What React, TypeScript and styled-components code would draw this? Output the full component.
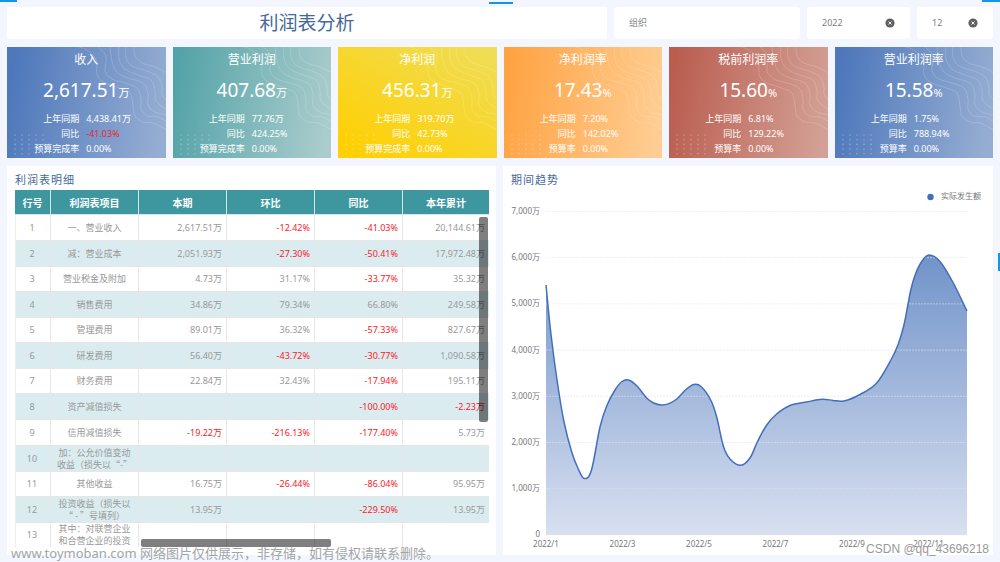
import React from "react";
import styled, { createGlobalStyle } from "styled-components";

const GlobalStyle = createGlobalStyle`
  * { box-sizing: border-box; }
  body {
    margin: 0;
    background: #f3f6fe;
    font-family: "Noto Sans", "Noto Sans CJK SC", sans-serif;
    color: #999;
  }
`;

const Page = styled.div`
  position: relative;
  display: flex;
  flex-direction: column;
  gap: 8px;
  height: 100vh;
  min-height: 560px;
  padding: 7px;
  overflow: hidden;
`;

const Accent = styled.i<{ $edge: "left" | "center" | "right" | "side" }>`
  position: absolute;
  background: #1296e6;
  ${({ $edge }) =>
    ({
      left: "left: 0; top: 0; width: 17px; height: 2px;",
      center: "left: 489px; top: 2px; width: 24px; height: 2px;",
      right: "right: 0; top: 0; width: 18px; height: 2px;",
      side: "right: 0; top: 253px; width: 2px; height: 18px;",
    })[$edge]}
`;

const TopBar = styled.header`
  display: grid;
  grid-template-columns: 600fr 186fr 103fr 76fr;
  gap: 7px;
  height: 32px;
  flex: none;
`;

const Title = styled.h1`
  margin: 0;
  background: #fff;
  color: #44689b;
  font-size: 19px;
  font-weight: 400;
  line-height: 32px;
  text-align: center;
`;

const Filter = styled.div`
  display: flex;
  align-items: center;
  min-width: 0;
  padding: 0 15px;
  background: #fff;
  border-radius: 3px;
`;

const FilterInput = styled.input`
  flex: 1;
  min-width: 0;
  width: 0;
  padding: 0;
  border: 0;
  outline: 0;
  background: none;
  color: #808080;
  font: 9px/16px "Noto Sans", "Noto Sans CJK SC", sans-serif;
  &::placeholder { color: #888; opacity: 1; }
`;

const ClearButton = styled.button`
  display: flex;
  padding: 0;
  border: 0;
  background: none;
`;

const Cards = styled.section`
  display: grid;
  grid-template-columns: repeat(6, 1fr);
  gap: 7px;
  flex: none;
`;

const Card = styled.article<{ $fill: string }>`
  position: relative;
  height: 111px;
  padding-top: 4px;
  background: ${({ $fill }) => $fill};
  color: #fff;
  text-align: center;
  overflow: hidden;
`;

const Waves = styled.svg`
  position: absolute;
  right: 0;
  top: 0;
`;

const Dots = styled.svg`
  position: absolute;
  left: 6px;
  bottom: 3px;
`;

const CardTitle = styled.h2`
  position: relative;
  margin: 0;
  font-size: 12px;
  font-weight: 400;
  line-height: 18px;
`;

const CardValue = styled.p`
  position: relative;
  margin: 8px 0 5px;
  font-size: 19px;
  line-height: 26px;
`;

const Unit = styled.span`
  font-size: 11px;
`;

const Facts = styled.dl`
  position: relative;
  display: grid;
  grid-template-columns: 1fr 1fr;
  margin: 0;
  font-size: 9px;
  line-height: 15px;
`;

const FactName = styled.dt`
  padding-right: 7px;
  text-align: right;
`;

const FactValue = styled.dd<{ $down?: boolean }>`
  margin: 0;
  text-align: left;
  color: ${({ $down }) => ($down ? "#e8252f" : "inherit")};
`;

const Panels = styled.main`
  display: grid;
  grid-template-columns: 489fr 490fr;
  gap: 7px;
  flex: 1;
  min-height: 0;
`;

const Panel = styled.section`
  display: flex;
  flex-direction: column;
  min-width: 0;
  min-height: 0;
  padding: 3px 7px 8px 8px;
  background: #fff;
`;

const ChartPanel = styled(Panel)`
  padding: 3px 0 0;
`;

const PanelTitle = styled.h2<{ $inset?: boolean }>`
  margin: 0;
  padding-left: ${({ $inset }) => ($inset ? "8px" : "0")};
  color: #44689b;
  font-size: 11px;
  font-weight: 400;
  letter-spacing: 1px;
  line-height: 21px;
`;

const TableView = styled.div`
  position: relative;
  flex: 1;
  min-height: 0;
  overflow: hidden;
`;

const Thumb = styled.i<{ $vertical?: boolean }>`
  position: absolute;
  border-radius: 2px;
  background: rgba(0, 0, 0, 0.5);
  ${({ $vertical }) =>
    $vertical
      ? "right: 1px; top: 27px; width: 9px; height: 205px;"
      : "left: 126px; bottom: 0; width: 190px; height: 8px;"}
`;

const Table = styled.table`
  width: 100%;
  table-layout: fixed;
  border-collapse: separate;
  border-spacing: 0;
  font-size: 9px;
  line-height: 12px;
`;

const IndexCol = styled.col`
  width: 36px;
`;

const DataCol = styled.col`
  width: 88px;
`;

const HeadCell = styled.th`
  height: 25px;
  padding: 2px 0 0;
  background: #3e979f;
  border-right: 1px solid #d5e6e8;
  border-bottom: 1px solid #d5e6e8;
  color: #fff;
  font-size: 10px;
  font-weight: 700;
  &:last-child { border-right: 0; }
`;

const Row = styled.tr`
  height: 25px;
  &:nth-child(even) {
    height: 26px;
    background: #daecf0;
  }
  &:nth-child(8n + 1) { height: 26px; }
`;

const Cell = styled.td<{ $kind?: "item" | "number"; $down?: boolean }>`
  padding: 0 ${({ $kind }) => ($kind === "number" ? "4px" : "0")} 0 0;
  border-right: 1px solid #e6e6e6;
  border-bottom: 1px solid #e6e6e6;
  color: ${({ $down }) => ($down ? "#fb2028" : "#999")};
  text-align: ${({ $kind }) => ($kind === "number" ? "right" : "center")};
  ${({ $kind }) => $kind === "item" && 'font-family: "Noto Sans CJK SC", sans-serif; white-space: pre;'}
  &:first-child { border-left: 1px solid #eee; padding-right: 2px; }
  &:last-child { border-right: 0; }
`;

const Chart = styled.svg`
  display: block;
  flex: 1;
  width: 100%;
  min-height: 0;
`;

const AxisText = styled.text`
  fill: #777;
  font-size: 8px;
`;

const SiteMark = styled.p`
  position: absolute;
  left: 11px;
  bottom: 0;
  margin: 0;
  color: #a3a5a9;
  font-size: 13px;
  line-height: 18px;
  white-space: nowrap;
`;

const AuthorMark = styled(SiteMark)`
  left: auto;
  right: 11px;
  bottom: 4px;
  color: #999;
  font-family: "Liberation Sans", sans-serif;
  font-size: 12px;
  text-shadow: 0 0 1px #fff;
`;

const blue = "linear-gradient(100deg, #4e78bb 5%, #95add2 95%)";

const cards = [
  { title: "收入", value: "2,617.51", unit: "万", last: "4,438.41万", yoy: "-41.03%", budget: "预算完成率", fill: blue },
  { title: "营业利润", value: "407.68", unit: "万", last: "77.76万", yoy: "424.25%", budget: "预算完成率", fill: "linear-gradient(100deg, #54a3a8 5%, #aacccc 95%)" },
  { title: "净利润", value: "456.31", unit: "万", last: "319.70万", yoy: "42.73%", budget: "预算完成率", fill: "linear-gradient(30deg, #ffcf00 5%, #f0dd55 95%)" },
  { title: "净利润率", value: "17.43", unit: "%", last: "7.20%", yoy: "142.02%", budget: "预算率", fill: "linear-gradient(100deg, #ffa343 5%, #ffcd92 95%)" },
  { title: "税前利润率", value: "15.60", unit: "%", last: "6.81%", yoy: "129.22%", budget: "预算率", fill: "linear-gradient(100deg, #ba5e50 5%, #d3a095 95%)" },
  { title: "营业利润率", value: "15.58", unit: "%", last: "1.75%", yoy: "788.94%", budget: "预算率", fill: blue },
];

const columns = ["行号", "利润表项目", "本期", "环比", "同比", "本年累计"];

const rows: string[][] = [
  ["一、营业收入", "2,617.51万", "-12.42%", "-41.03%", "20,144.61万"],
  ["减：营业成本", "2,051.93万", "-27.30%", "-50.41%", "17,972.48万"],
  ["营业税金及附加", "4.73万", "31.17%", "-33.77%", "35.32万"],
  ["销售费用", "34.86万", "79.34%", "66.80%", "249.58万"],
  ["管理费用", "89.01万", "36.32%", "-57.33%", "827.67万"],
  ["研发费用", "56.40万", "-43.72%", "-30.77%", "1,090.58万"],
  ["财务费用", "22.84万", "32.43%", "-17.94%", "195.11万"],
  ["资产减值损失", "", "", "-100.00%", "-2.23万"],
  ["信用减值损失", "-19.22万", "-216.13%", "-177.40%", "5.73万"],
  ["加：公允价值变动\n收益（损失以“-”", "", "", "", ""],
  ["其他收益", "16.75万", "-26.44%", "-86.04%", "95.95万"],
  ["投资收益（损失以\n“ - ”号填列）", "13.95万", "", "-229.50%", "13.95万"],
  ["其中：对联营企业\n和合营企业的投资", "", "", "", ""],
];

type Point = [number, number];

// Catmull-Rom spline through the points, written as cubic segments
const smooth = (p: Point[]) => {
  let d = `M${p[0][0]} ${p[0][1]}`;
  for (let i = 0; i < p.length - 1; i++) {
    const a = p[Math.max(i - 1, 0)];
    const b = p[i];
    const c = p[i + 1];
    const e = p[Math.min(i + 2, p.length - 1)];
    d += ` C${b[0] + (c[0] - a[0]) / 6} ${b[1] + (c[1] - a[1]) / 6} ${c[0] - (e[0] - b[0]) / 6} ${c[1] - (e[1] - b[1]) / 6} ${c[0]} ${c[1]}`;
  }
  return d;
};

const waves: Point[][] = [
  [[67, -1], [77, 2], [88, 12], [89, 27], [95, 35], [109, 40], [122, 46], [125, 59], [127, 69], [135, 75], [145, 76], [159, 83]],
  [[88, -2], [98, 9], [97, 24], [104, 32], [117, 36], [129, 41], [133, 52], [133, 62], [139, 69], [150, 70], [159, 75]],
  [[102, -1], [104, 14], [109, 25], [120, 31], [135, 36], [140, 47], [140, 58], [147, 65], [159, 68]],
  [[111, -1], [111, 12], [117, 22], [130, 28], [143, 33], [147, 44], [148, 54], [159, 63]],
  [[118, -1], [118, 10], [124, 19], [139, 24], [150, 30], [154, 40], [154, 47], [159, 54]],
  [[126, -1], [127, 9], [134, 16], [147, 20], [159, 26]],
];

const trend: Point[] = [
  [43, 95], [47.6, 141], [53.7, 188], [60.8, 231], [68.7, 262], [75.3, 279], [81.3, 288.6], [88.5, 280],
  [97, 237], [103.7, 216], [112, 200], [119, 191.5], [125.5, 190], [134, 196], [143.7, 208], [150.5, 213],
  [158.3, 215], [166, 213.6], [173.7, 209], [183, 199.5], [190.7, 194.5], [198, 196.5], [207.7, 210],
  [213.7, 227], [220.3, 256], [227, 269], [237.7, 275.3], [247, 268], [254.3, 252], [263.7, 235],
  [273.7, 224], [287, 215.5], [303.7, 212], [319, 209.3], [330, 210.4], [341, 211], [357, 204.5],
  [373.7, 193], [388.7, 168.5], [395.3, 154], [400.7, 136], [404.5, 117], [408, 99], [412.5, 84],
  [418.7, 71.5], [426, 65], [437, 71.5], [450.3, 93], [464, 121],
];

const ticks = ["7,000万", "6,000万", "5,000万", "4,000万", "3,000万", "2,000万", "1,000万", "0"];
const months = ["2022/1", "2022/3", "2022/5", "2022/7", "2022/9", "2022/11"];

const ClearIcon = () => (
  <svg width="10" height="10" viewBox="0 0 10 10" aria-hidden="true">
    <circle cx="5" cy="5" r="4.6" fill="#5f6165" />
    <path d="M3.5 3.5l3 3M6.5 3.5l-3 3" stroke="#fff" strokeWidth="0.9" />
  </svg>
);

const CardArt = () => (
  <>
    <Waves width="158" height="111" viewBox="0 0 158 111" aria-hidden="true">
      {waves.map((w, i) => (
        <path key={i} d={smooth(w)} fill="none" stroke="#fff" strokeOpacity="0.17" strokeWidth="1" />
      ))}
    </Waves>
    <Dots width="33" height="21" viewBox="0 0 33 21" aria-hidden="true">
      {[0, 1, 2, 3, 4].map((r) =>
        [0, 1, 2, 3, 4].map((c) => (
          <circle key={`${r}-${c}`} cx={2 + c * 7} cy={1 + r * 4.7} r="0.8" fill="#fff" fillOpacity="0.3" />
        ))
      )}
    </Dots>
  </>
);

const TrendChart = () => (
  <Chart viewBox="0 0 490 365" role="img" aria-label="期间趋势">
    <defs>
      <linearGradient id="area" x1="0" y1="0" x2="0" y2="1">
        <stop offset="0" stopColor="#7193c9" />
        <stop offset="1" stopColor="#d8e0f0" />
      </linearGradient>
    </defs>
    <path d={`${smooth(trend)} V345 H43 Z`} fill="url(#area)" />
    {ticks.map((t, i) => (
      <React.Fragment key={t}>
        <path d={`M43 ${21.5 + i * 46.2}H464`} stroke="#e2e4ea" strokeOpacity="0.6" strokeDasharray="2 1" />
        <AxisText x="37" y={24 + i * 46.2} textAnchor="end">{t}</AxisText>
      </React.Fragment>
    ))}
    <path d={smooth(trend)} fill="none" stroke="#426fba" strokeWidth="1.5" />
    {months.map((m, i) => (
      <AxisText key={m} x={43 + i * 76.5} y="357" textAnchor="middle">{m}</AxisText>
    ))}
    <circle cx="427.5" cy="7" r="3.2" fill="#426fba" />
    <AxisText x="438" y="9">实际发生额</AxisText>
  </Chart>
);

export default function App() {
  return (
    <>
      <GlobalStyle />
      <Page>
        <TopBar>
          <Title>利润表分析</Title>
          <Filter>
            <FilterInput aria-label="组织" placeholder="组织" />
          </Filter>
          <Filter>
            <FilterInput aria-label="年份" defaultValue="2022" />
            <ClearButton aria-label="清除年份"><ClearIcon /></ClearButton>
          </Filter>
          <Filter>
            <FilterInput aria-label="月份" defaultValue="12" />
            <ClearButton aria-label="清除月份"><ClearIcon /></ClearButton>
          </Filter>
        </TopBar>
        <Cards>
          {cards.map((c) => (
            <Card key={c.title} $fill={c.fill}>
              <CardArt />
              <CardTitle>{c.title}</CardTitle>
              <CardValue>{c.value}<Unit>{c.unit}</Unit></CardValue>
              <Facts>
                <FactName>上年同期</FactName>
                <FactValue>{c.last}</FactValue>
                <FactName>同比</FactName>
                <FactValue $down={c.yoy.startsWith("-")}>{c.yoy}</FactValue>
                <FactName>{c.budget}</FactName>
                <FactValue>0.00%</FactValue>
              </Facts>
            </Card>
          ))}
        </Cards>
        <Panels>
          <Panel>
            <PanelTitle>利润表明细</PanelTitle>
            <TableView>
              <Table>
                <colgroup><IndexCol /><DataCol /><DataCol /><DataCol /><DataCol /><col /></colgroup>
                <thead>
                  <tr>{columns.map((c) => <HeadCell key={c} scope="col">{c}</HeadCell>)}</tr>
                </thead>
                <tbody>
                  {rows.map(([item, ...values], i) => (
                    <Row key={i}>
                      <Cell>{i + 1}</Cell>
                      <Cell $kind="item">{item}</Cell>
                      {values.map((v, j) => (
                        <Cell key={j} $kind="number" $down={v.startsWith("-")}>{v}</Cell>
                      ))}
                    </Row>
                  ))}
                </tbody>
              </Table>
              <Thumb $vertical />
              <Thumb />
            </TableView>
          </Panel>
          <ChartPanel>
            <PanelTitle $inset>期间趋势</PanelTitle>
            <TrendChart />
          </ChartPanel>
        </Panels>
        <Accent $edge="left" />
        <Accent $edge="center" />
        <Accent $edge="right" />
        <Accent $edge="side" />
        <SiteMark>www.toymoban.com 网络图片仅供展示，非存储，如有侵权请联系删除。</SiteMark>
        <AuthorMark>CSDN @qq_43696218</AuthorMark>
      </Page>
    </>
  );
}
